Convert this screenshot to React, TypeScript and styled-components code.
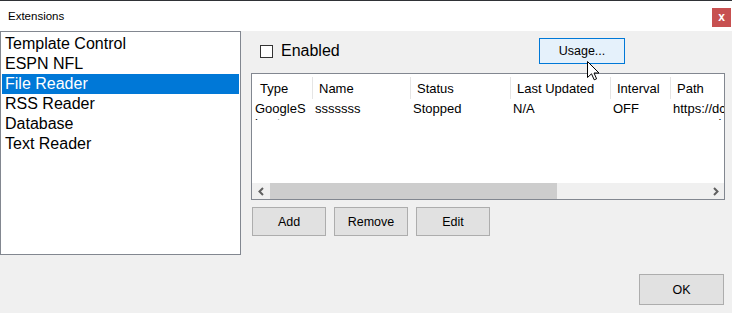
import React from "react";
import styled, { createGlobalStyle } from "styled-components";

const GlobalStyle = createGlobalStyle`
  body {
    margin: 0;
    background: #f0f0f0;
    font-family: "Liberation Sans", Arial, sans-serif;
  }
`;

const Window = styled.div`
  position: relative;
  width: 732px;
  height: 313px;
  background: #f0f0f0;
  display: flex;
  flex-direction: column;
  overflow: hidden;
`;

const TitleBar = styled.div`
  height: 30px;
  border-top: 1px solid #2f3236;
  background: #ffffff;
  display: flex;
  align-items: flex-start;
  justify-content: space-between;
  padding-left: 8px;
  flex-shrink: 0;
`;

const Title = styled.span`
  font-size: 11.5px;
  color: #000;
  line-height: 30px;
`;

const CloseButton = styled.div`
  width: 19px;
  height: 19px;
  margin-top: 7px;
  margin-right: 1px;
  background: #c75050;
  color: #fff;
  font-weight: bold;
  font-size: 12px;
  display: flex;
  align-items: center;
  justify-content: center;
  line-height: 1;
  padding-bottom: 2px;
  box-sizing: border-box;
`;

const Body = styled.div`
  display: flex;
  align-items: flex-start;
`;

const ListBox = styled.ul`
  margin: 0;
  padding: 2px 1px 1px;
  list-style: none;
  width: 241px;
  height: 224px;
  box-sizing: border-box;
  background: #fff;
  border: 1px solid #828790;
  flex-shrink: 0;
`;

const ListItem = styled.li<{ selected?: boolean }>`
  height: 20px;
  line-height: 20px;
  padding-left: 3px;
  font-size: 16px;
  color: ${({ selected }) => (selected ? "#fff" : "#000")};
  background: ${({ selected }) => (selected ? "#0078d7" : "transparent")};
  white-space: nowrap;
`;

const RightPanel = styled.div`
  margin-left: 10px;
  width: 474px;
  display: flex;
  flex-direction: column;
`;

const TopRow = styled.div`
  margin-top: 7px;
  height: 26px;
  display: flex;
  align-items: center;
  padding-left: 9px;
`;

const CheckLabel = styled.label`
  flex: 0 0 279px;
  display: flex;
  align-items: center;
  font-size: 16px;
  color: #000;
`;

const CheckBox = styled.span`
  width: 13px;
  height: 13px;
  box-sizing: border-box;
  border: 1px solid #333;
  background: #fff;
  margin-right: 8px;
`;

const Button = styled.button<{ hot?: boolean; w?: number; h?: number }>`
  width: ${({ w }) => w ?? 74}px;
  height: ${({ h }) => h ?? 29}px;
  box-sizing: border-box;
  padding: 0;
  font-family: "Liberation Sans", Arial, sans-serif;
  font-size: 12.5px;
  color: #000;
  background: ${({ hot }) => (hot ? "#e5f1fb" : "#e1e1e1")};
  border: 1px solid ${({ hot }) => (hot ? "#0078d7" : "#adadad")};
  border-radius: 0;
`;

const ListView = styled.div`
  margin-top: 9px;
  height: 127px;
  box-sizing: border-box;
  border: 1px solid #828790;
  background: #fff;
  display: flex;
  flex-direction: column;
  font-size: 13px;
  color: #000;
`;

const Row = styled.div<{ header?: boolean }>`
  display: grid;
  grid-template-columns: 61px 98px 100px 100px 60px 1fr;
  height: ${({ header }) => (header ? 25 : 21)}px;
  overflow: hidden;
`;

const HeadCell = styled.div<{ first?: boolean; last?: boolean }>`
  display: flex;
  align-items: center;
  padding-left: ${({ first }) => (first ? 8 : 6)}px;
  margin-top: 3px;
  border-right: ${({ last }) => (last ? "none" : "1px solid #e5e5e5")};
  white-space: nowrap;
  overflow: hidden;
`;

const HeadText = styled.span`
  margin-top: 1px;
`;

const DataCell = styled.div<{ first?: boolean }>`
  padding-left: ${({ first }) => (first ? 3 : 2)}px;
  padding-top: 2px;
  line-height: 15px;
  white-space: nowrap;
  overflow: hidden;
`;

const Filler = styled.div`
  flex: 1;
`;

const HScroll = styled.div`
  height: 16px;
  background: #f0f0f0;
  display: flex;
  align-items: stretch;
`;

const ScrollArrow = styled.div`
  width: 17px;
  display: flex;
  align-items: center;
  justify-content: center;
  flex-shrink: 0;
`;

const Track = styled.div`
  flex: 1;
  display: flex;
  align-items: stretch;
`;

const Thumb = styled.div`
  margin-left: 1px;
  width: 287px;
  background: #cdcdcd;
`;

const ButtonRow = styled.div`
  margin-top: 7px;
  margin-left: 1px;
  display: flex;
  gap: 8px;
`;

const Footer = styled.div`
  margin-top: 19px;
  padding-right: 8px;
  display: flex;
  justify-content: flex-end;
`;

const Cursor = styled.svg`
  position: absolute;
  left: 587px;
  top: 61px;
`;

const items = ["Template Control", "ESPN NFL", "File Reader", "RSS Reader", "Database", "Text Reader"];

const columns = ["Type", "Name", "Status", "Last Updated", "Interval", "Path"];

const data = [
  ["GoogleS", "heets"],
  ["sssssss"],
  ["Stopped"],
  ["N/A"],
  ["OFF"],
  ["https://dc", "cs.google.c"],
];

const Chevron = ({ dir }: { dir: "left" | "right" }) => (
  <svg width="8" height="9" viewBox="0 0 8 9">
    <polyline
      points={dir === "left" ? "6,1 2.5,4.5 6,8" : "2,1 5.5,4.5 2,8"}
      fill="none"
      stroke="#606060"
      strokeWidth="2"
    />
  </svg>
);

export default function App() {
  return (
    <>
      <GlobalStyle />
      <Window>
        <TitleBar>
          <Title>Extensions</Title>
          <CloseButton>x</CloseButton>
        </TitleBar>
        <Body>
          <ListBox>
            {items.map((item) => (
              <ListItem key={item} selected={item === "File Reader"}>
                {item}
              </ListItem>
            ))}
          </ListBox>
          <RightPanel>
            <TopRow>
              <CheckLabel>
                <CheckBox />
                Enabled
              </CheckLabel>
              <Button hot w={86} h={26}>
                Usage...
              </Button>
            </TopRow>
            <ListView>
              <Row header>
                {columns.map((col, i) => (
                  <HeadCell key={col} first={i === 0} last={i === columns.length - 1}>
                    <HeadText>{col}</HeadText>
                  </HeadCell>
                ))}
              </Row>
              <Row>
                {data.map((lines, i) => (
                  <DataCell key={i} first={i === 0}>
                    {lines.map((line) => (
                      <div key={line}>{line}</div>
                    ))}
                  </DataCell>
                ))}
              </Row>
              <Filler />
              <HScroll>
                <ScrollArrow>
                  <Chevron dir="left" />
                </ScrollArrow>
                <Track>
                  <Thumb />
                </Track>
                <ScrollArrow>
                  <Chevron dir="right" />
                </ScrollArrow>
              </HScroll>
            </ListView>
            <ButtonRow>
              <Button>Add</Button>
              <Button>Remove</Button>
              <Button>Edit</Button>
            </ButtonRow>
          </RightPanel>
        </Body>
        <Footer>
          <Button w={85} h={31}>
            OK
          </Button>
        </Footer>
        <Cursor width="13" height="20" viewBox="0 0 13 20">
          <path
            d="M0.5 0.5 L0.5 16.5 L4.5 12.8 L7.2 18.8 L9.6 17.8 L7 12 L12 12 Z"
            fill="#fff"
            stroke="#000"
            strokeWidth="1"
            strokeLinejoin="miter"
          />
        </Cursor>
      </Window>
    </>
  );
}
